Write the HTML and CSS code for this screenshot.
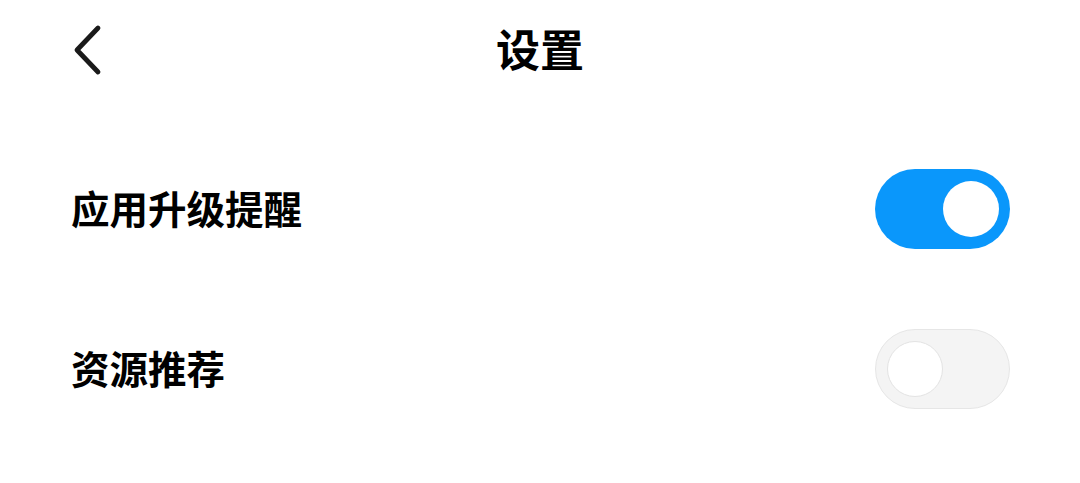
FILE: index.html
```html
<!DOCTYPE html>
<html lang="zh-CN">
<head>
<meta charset="utf-8">
<title>设置</title>
<link rel="stylesheet" href="styles.css">
</head>
<body>
<div class="page">
  <header class="header">
    <button class="back" aria-label="返回">
      <svg width="40" height="60" viewBox="0 0 40 60">
        <path d="M27 8 L6 30 L27 52" fill="none" stroke="#1a1a1a" stroke-width="4.8" stroke-linecap="round" stroke-linejoin="round"/>
      </svg>
    </button>
    <h1 class="title">设置</h1>
  </header>
  <ul class="list">
    <li class="row">
      <span class="label">应用升级提醒</span>
      <span class="switch on"><span class="knob"></span></span>
    </li>
    <li class="row">
      <span class="label">资源推荐</span>
      <span class="switch off"><span class="knob"></span></span>
    </li>
  </ul>
</div>
</body>
</html>
```
FILE: styles.css
```css
html, body {
  margin: 0;
  padding: 0;
  background: #ffffff;
}
body {
  font-family: "Noto Sans CJK SC", "Noto Sans", sans-serif;
  color: #000000;
}
.page {
  width: 1080px;
  height: 483px;
  overflow: hidden;
}
.header {
  position: relative;
  height: 102px;
  display: flex;
  align-items: center;
  justify-content: center;
}
.back {
  position: absolute;
  left: 71px;
  top: 20px;
  width: 40px;
  height: 60px;
  padding: 0;
  border: 0;
  background: none;
  display: flex;
}
.title {
  margin: 0;
  padding-bottom: 6px;
  font-size: 44px;
  font-weight: 700;
  line-height: 1;
  color: #000;
}
.list {
  list-style: none;
  margin: 0;
  padding: 27px 0 0 0;
}
.row {
  height: 160px;
  display: flex;
  align-items: center;
  justify-content: space-between;
  padding: 0 70px 0 71px;
}
.label {
  padding-bottom: 3px;
  font-size: 38.5px;
  font-weight: 700;
  line-height: 1;
  color: #000;
}
.switch {
  box-sizing: border-box;
  width: 135px;
  height: 80px;
  border-radius: 40px;
  display: flex;
  align-items: center;
  padding: 0 11px;
}
.switch.on {
  background: #0a97fb;
  justify-content: flex-end;
}
.switch.off {
  background: #f4f4f4;
  border: 1.5px solid #e6e6e6;
  justify-content: flex-start;
}
.knob {
  box-sizing: border-box;
  width: 56px;
  height: 56px;
  border-radius: 50%;
  background: #ffffff;
}
.switch.off .knob {
  border: 1.5px solid #e3e3e3;
}
```
